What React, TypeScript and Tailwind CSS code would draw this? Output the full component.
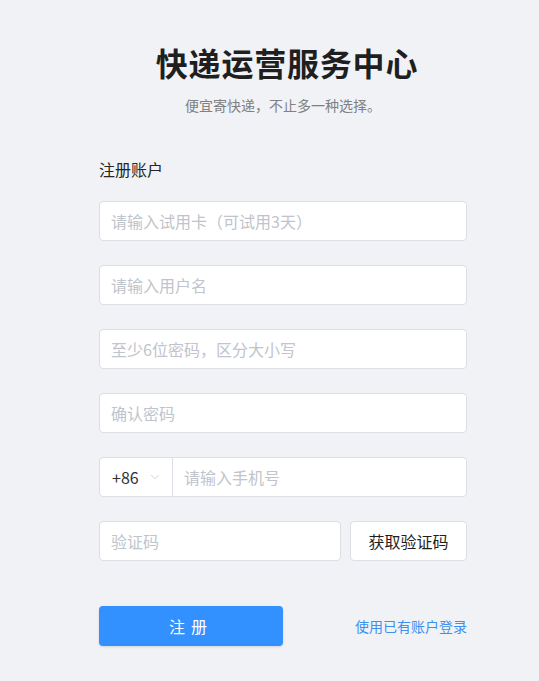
import { ChevronDown } from 'lucide-react';

const font = { fontFamily: '"Noto Sans CJK SC", "Noto Sans", sans-serif' };

function Field({ placeholder }: { placeholder: string }) {
  return (
    <input
      placeholder={placeholder}
      className="block h-10 w-full rounded-sm border border-[#dcdfe6] bg-white px-[11px] text-[16px] text-[#303133] outline-none placeholder:text-[#c0c4cc]"
    />
  );
}

export default function App() {
  return (
    <div className="min-h-[681px] w-full bg-[#f0f2f5]" style={font}>
      <div className="ml-[99px] w-[368px] pt-[38px]">
        <h1 className="pl-2 text-center text-[32px] font-bold leading-[48px] tracking-[0.8px] text-[#1f1f1f]">快递运营服务中心</h1>
        <p className="mt-[9px] text-center text-[14px] leading-5 text-[#808080]">便宜寄快递，不止多一种选择。</p>

        <div className="mt-[42px] text-[16px] leading-6 text-[#262626]">注册账户</div>

        <div className="mt-[20px] flex flex-col gap-6">
          <Field placeholder="请输入试用卡（可试用3天）" />
          <Field placeholder="请输入用户名" />
          <Field placeholder="至少6位密码，区分大小写" />
          <Field placeholder="确认密码" />
          <div className="flex h-10 w-full rounded-sm border border-[#dcdfe6] bg-white">
            <div className="flex w-[73px] items-center justify-between border-r border-[#dcdfe6] pl-3 pr-2.5 text-[16px] text-[#303133]">
              <span>+86</span>
              <ChevronDown className="h-3.5 w-3.5 text-[#c0c4cc]" strokeWidth={1.3} />
            </div>
            <input placeholder="请输入手机号" className="min-w-0 flex-1 bg-transparent px-[11px] text-[16px] outline-none placeholder:text-[#c0c4cc]" />
          </div>
          <div className="flex gap-[9px]">
            <div className="flex-1">
              <Field placeholder="验证码" />
            </div>
            <button className="h-10 w-[117px] rounded-sm border border-[#dcdfe6] bg-white text-[16px] text-[#1f1f1f]">获取验证码</button>
          </div>
        </div>

        <div className="mt-[45px] flex items-center justify-between">
          <button className="h-10 w-[184px] rounded-sm bg-[#3390ff] text-[16px] tracking-[6px] text-white shadow-sm">注册</button>
          <a className="text-[14px] text-[#3d8ff0]">使用已有账户登录</a>
        </div>
      </div>
    </div>
  );
}
